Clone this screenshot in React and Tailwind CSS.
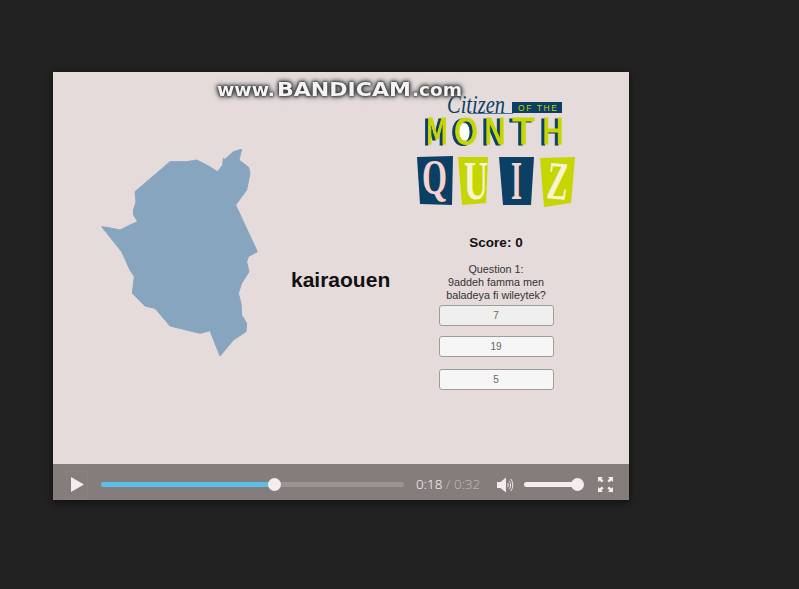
const mapPath = "M35 260 L50 262 L90 270 L120 255 L143 245 L131 225 L130 212 L138 185 L135 155 L240 65 L290 65 L320 60 L350 75 L383 95 L398 75 L400 55 L405 58 L430 35 L455 28 L447 60 L476 82 L480 100 L470 150 L437 195 L502 335 L475 350 L470 365 L477 395 L455 430 L445 460 L453 490 L455 525 L470 550 L468 575 L430 600 L390 648 L360 572 L330 580 L240 558 L225 540 L195 505 L165 498 L127 460 L133 410 L120 390 L95 335 Z";

const quizTiles = [
  { points: "1,69 37,68 36,117 4,116", fill: "#0b3f63" },
  { points: "42,69 72,69 70,115 46,117", fill: "#c6d600" },
  { points: "83,69 118,69 115,117 87,117", fill: "#0b3f63" },
  { points: "124,70 159,69 155,115 128,119", fill: "#c6d600" },
];

const quizLetters = [
  { ch: "Q", x: 6, y: 106, w: 25, fill: "#f4d3d0", size: 50 },
  { ch: "U", x: 48, y: 111, w: 24, fill: "#f8f3d2", size: 54 },
  { ch: "I", x: 95, y: 111, w: 11, fill: "#f4d3d0", size: 54 },
  { ch: "Z", x: 131, y: 111, w: 21, fill: "#f8f3d2", size: 54, tilt: "rotate(5 141 95)" },
];

const monthLetters = [
  { ch: "M", x: 10, w: 22 },
  { ch: "O", x: 38, w: 24 },
  { ch: "N", x: 68, w: 22 },
  { ch: "T", x: 97, w: 21 },
  { ch: "H", x: 126, w: 22 },
];

const QuizLogo = () => (
  <svg width="160" height="120" viewBox="0 0 160 120" className="block overflow-visible">
    <text x="31" y="25" fill="#0b3f63" fontSize="26" fontStyle="italic" fontFamily="'Liberation Serif', serif" textLength="58" lengthAdjust="spacingAndGlyphs">Citizen</text>
    <rect x="53" y="25" width="44" height="1" fill="#4a7690" />
    <rect x="96" y="14" width="50" height="11" fill="#0b3f63" />
    <text x="102" y="22.5" fill="#c6d600" fontSize="8.5" textLength="39" fontFamily="'Liberation Sans', sans-serif">OF THE</text>
    <ellipse cx="49" cy="44" rx="6" ry="8" fill="#ffffff" />
    {monthLetters.map((l) => (
      <text
        key={l.ch}
        x={l.x}
        y="56"
        textLength={l.w}
        lengthAdjust="spacingAndGlyphs"
        fill="#c6d600"
        stroke="#c6d600"
        strokeWidth="1"
        fontSize="35"
        fontFamily="'DejaVu Sans', sans-serif"
        className="[filter:drop-shadow(-3px_1px_0_#0b3f63)]"
      >
        {l.ch}
      </text>
    ))}
    {quizTiles.map((t, i) => (
      <polygon key={i} points={t.points} fill={t.fill} />
    ))}
    {quizLetters.map((l) => (
      <text
        key={l.ch}
        x={l.x}
        y={l.y}
        textLength={l.w}
        lengthAdjust="spacingAndGlyphs"
        fill={l.fill}
        fontSize={l.size}
        fontWeight="700"
        transform={l.tilt}
        fontFamily="'Liberation Serif', serif"
      >
        {l.ch}
      </text>
    ))}
  </svg>
);

const Watermark = () => (
  <svg width="250" height="24" viewBox="0 0 250 24" className="absolute left-[162px] top-[6px] overflow-visible font-['DejaVu_Sans',sans-serif] font-bold [filter:drop-shadow(0_0_1px_#222)_drop-shadow(0_0_2px_#444)_drop-shadow(0_0_2px_#777)]">
    <text x="2" y="18" fill="#f4f4f4" fontSize="18" textLength="58" lengthAdjust="spacingAndGlyphs">www.</text>
    <text x="62" y="18" fill="#f4f4f4" fontSize="20" textLength="134" lengthAdjust="spacingAndGlyphs">BANDICAM</text>
    <text x="197" y="18" fill="#f4f4f4" fontSize="18" textLength="50" lengthAdjust="spacingAndGlyphs">.com</text>
  </svg>
);

const VolumeIcon = () => (
  <svg width="17" height="16" viewBox="0 0 17 16" fill="none">
    <path d="M0 5 H3.5 L9 0.5 V15.5 L3.5 11 H0 Z" fill="#f2eeee" />
    <path d="M10.5 6 C11.6 7 11.6 9 10.5 10" stroke="#f2eeee" />
    <path d="M12 3.8 C14 5.6 14 10.4 12 12.2" stroke="#f2eeee" />
    <path d="M13.6 2 C16.4 4.6 16.4 11.4 13.6 14" stroke="#f2eeee" />
  </svg>
);

const FullscreenIcon = () => (
  <svg width="15" height="15" viewBox="0 0 15 15" fill="#f2eeee">
    <path d="M0 0 H5 L3.4 1.6 L5.6 3.8 L3.8 5.6 L1.6 3.4 L0 5 Z" />
    <path d="M15 0 V5 L13.4 3.4 L11.2 5.6 L9.4 3.8 L11.6 1.6 L10 0 Z" />
    <path d="M0 15 V10 L1.6 11.6 L3.8 9.4 L5.6 11.2 L3.4 13.4 L5 15 Z" />
    <path d="M15 15 H10 L11.6 13.4 L9.4 11.2 L11.2 9.4 L13.4 11.6 L15 10 Z" />
  </svg>
);

const Answer = ({ label, className }) => (
  <div className={`w-[115px] h-[21px] flex items-center justify-center rounded-[3px] border border-[#a09c9c] text-[10px] text-[#666] ${className}`}>
    {label}
  </div>
);

const Slide = () => (
  <div className="relative h-[392px] flex bg-[#e5dbdb] font-['Liberation_Sans',Arial,sans-serif]">
    <div className="ml-[37px] mt-[68px] w-[180px] shrink-0">
      <svg width="180" height="225" viewBox="0 0 540 675">
        <path d={mapPath} fill="#88a5bf" stroke="#88a5bf" strokeWidth="3" strokeLinejoin="round" />
      </svg>
    </div>
    <div className="ml-[21px] mt-[194px] w-[125px] shrink-0 text-[21px] leading-7 font-bold text-[#111]">kairaouen</div>
    <div className="w-[160px] shrink-0 mt-[16px] flex flex-col items-center">
      <QuizLogo />
      <div className="mt-[27px] text-[13.5px] leading-4 font-bold text-[#111]">Score: 0</div>
      <div className="mt-[12px] text-[10.8px] leading-[13px] text-center text-[#333]">
        <div>Question 1:</div>
        <div>9addeh famma men</div>
        <div>baladeya fi wileytek?</div>
      </div>
      <Answer label="7" className="mt-[3px] bg-[#efefef]" />
      <Answer label="19" className="mt-[10px] bg-[#f6f6f6]" />
      <Answer label="5" className="mt-[12px] bg-[#f6f6f6]" />
    </div>
    <Watermark />
  </div>
);

const Controls = () => (
  <div className="h-[36px] pt-[5px] flex items-center bg-[#857d7b]">
    <div className="ml-[13px] w-[22px] h-[28px] flex items-center justify-center border border-dotted border-[#8e8684]">
      <svg width="13" height="15" viewBox="0 0 13 15" className="ml-[1px]">
        <path d="M0 0 L13 7.5 L0 15 Z" fill="#f2eeee" />
      </svg>
    </div>
    <div className="ml-[13px] relative w-[303px] h-[5px] rounded-full bg-[#9b9492]">
      <div className="w-[173px] h-full rounded-full bg-[#5bc0e6]" />
      <div className="absolute left-[167px] top-[-4px] w-[13px] h-[13px] rounded-full bg-[#f2eeee]" />
    </div>
    <div className="ml-[12px] w-[64px] whitespace-nowrap text-[13.5px] font-['Open_Sans',sans-serif] font-light text-white">
      0:18 <span className="text-[#c4bebc]">/ 0:32</span>
    </div>
    <div className="ml-[17px]"><VolumeIcon /></div>
    <div className="ml-[10px] relative w-[53px] h-[5px] rounded-full bg-[#f2eeee]">
      <div className="absolute right-[-7px] top-[-4px] w-[13px] h-[13px] rounded-full bg-[#f2eeee]" />
    </div>
    <div className="ml-[21px]"><FullscreenIcon /></div>
  </div>
);

const App = () => {
  return (
    <div className="w-[799px] h-[589px] overflow-hidden bg-[#222222] pl-[53px] pt-[72px]">
      <div className="w-[576px] shadow-[0_2px_8px_rgba(0,0,0,0.6)]">
        <Slide />
        <Controls />
      </div>
    </div>
  );
};

export default App;
